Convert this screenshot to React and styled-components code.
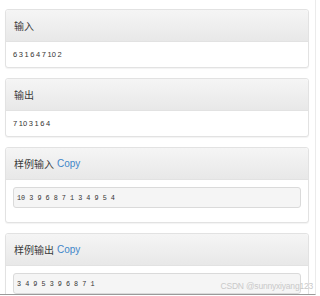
import React from "react";
import styled, { createGlobalStyle } from "styled-components";

const Global = createGlobalStyle`
  html, body { margin: 0; padding: 0; background: #fff; }
  body { font-family: "Liberation Sans", Arial, "Noto Sans CJK SC", sans-serif; color: #333; }
`;

const Page = styled.div`
  position: relative;
  width: 316px;
  height: 295px;
  overflow: hidden;
  border-right: 1px solid #ebebeb;
  border-bottom: 1px solid #9a9a9a;
  padding: 9px 0 0 5px;
  box-sizing: border-box;
  display: flex;
  flex-direction: column;
  gap: 10px;
`;

const Panel = styled.section`
  width: 304px;
  flex-shrink: 0;
  border: 1px solid #e2e2e2;
  border-radius: 3px;
  background: #fff;
  box-shadow: 0 1px 1px rgba(0, 0, 0, 0.05);
  box-sizing: border-box;
`;

const Head = styled.div`
  height: 31px;
  display: flex;
  align-items: center;
  padding-left: 8px;
  background: linear-gradient(to bottom, #f5f5f5 0%, #e8e8e8 100%);
  border-bottom: 1px solid #e2e2e2;
  border-radius: 3px 3px 0 0;
  font-size: 10px;
  color: #3a3a3a;
  gap: 3px;
`;

const CopyLink = styled.span`
  color: #3f86c9;
  font-size: 10px;
`;

const Body = styled.div`
  padding: 0 7px;
  height: 25px;
  display: flex;
  align-items: center;
  font-size: 7.5px;
  color: #333;
  word-spacing: -0.5px;
`;

const PreBody = styled.div`
  padding: 7px 7px 14px;
`;

const Pre = styled.div`
  height: 19px;
  display: flex;
  align-items: center;
  padding: 0 3px;
  background: #f5f5f5;
  border: 1px solid #dadada;
  border-radius: 3px;
  font-family: "Liberation Mono", "DejaVu Sans Mono", monospace;
  font-size: 6.8px;
  color: #333;
  white-space: pre;
`;

const Watermark = styled.div`
  position: absolute;
  right: 2px;
  bottom: 3px;
  font-size: 8.5px;
  color: #c9c9c9;
  letter-spacing: -0.2px;
`;

const Section = ({ title, copy, children, pre }) => (
  <Panel>
    <Head>
      {title}
      {copy && <CopyLink>Copy</CopyLink>}
    </Head>
    {pre ? (
      <PreBody>
        <Pre>{children}</Pre>
      </PreBody>
    ) : (
      <Body>{children}</Body>
    )}
  </Panel>
);

export default function App() {
  return (
    <>
      <Global />
      <Page>
        <Section title="输入">6 3 1 6 4 7 10 2</Section>
        <Section title="输出">7 10 3 1 6 4</Section>
        <Section title="样例输入" copy pre>
          10 3 9 6 8 7 1 3 4 9 5 4
        </Section>
        <Section title="样例输出" copy pre>
          3 4 9 5 3 9 6 8 7 1
        </Section>
        <Watermark>CSDN @sunnyxiyang123</Watermark>
      </Page>
    </>
  );
}
